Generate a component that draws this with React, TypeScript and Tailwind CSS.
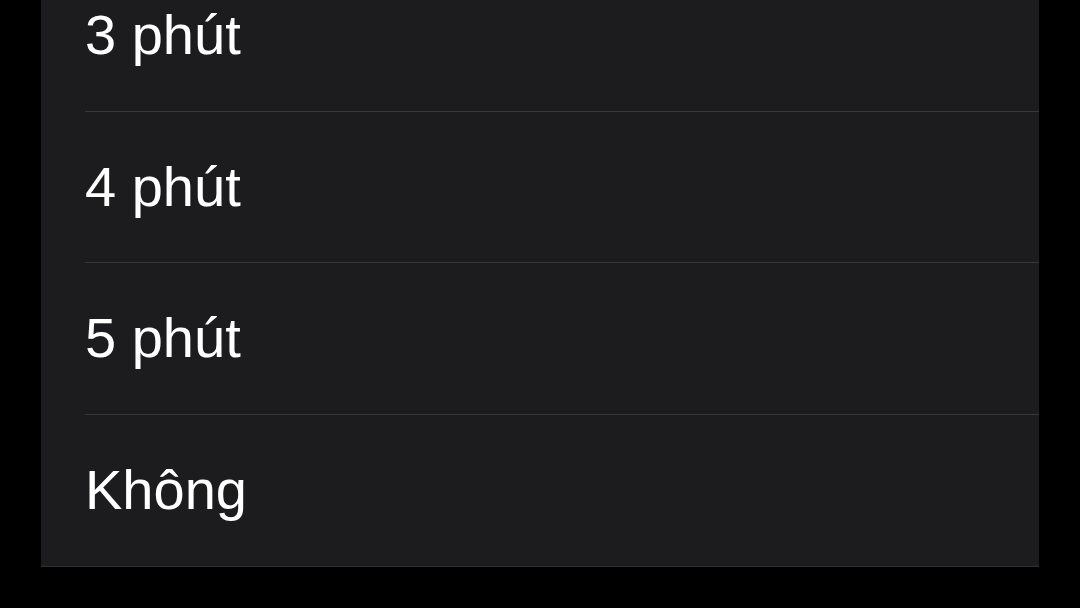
export default function App() {
  const items = ["3 phút", "4 phút", "5 phút", "Không"];
  return (
    <div className="w-[1080px] h-[608px] bg-black overflow-hidden" style={{ fontFamily: '"Liberation Sans", Arial, sans-serif' }}>
      <div className="ml-[41px] w-[998px] -mt-[40px] bg-[#1c1c1e] border-b border-[#303033]">
        {items.map((t, i) => (
          <div key={t} className="pl-[44px]">
            <div
              className={`h-[151.5px] flex items-center text-white text-[56px] leading-none ${
                i < items.length - 1 ? "border-b border-[#38383a]" : ""
              }`}
            >
              <span>{t}</span>
            </div>
          </div>
        ))}
      </div>
    </div>
  );
}
